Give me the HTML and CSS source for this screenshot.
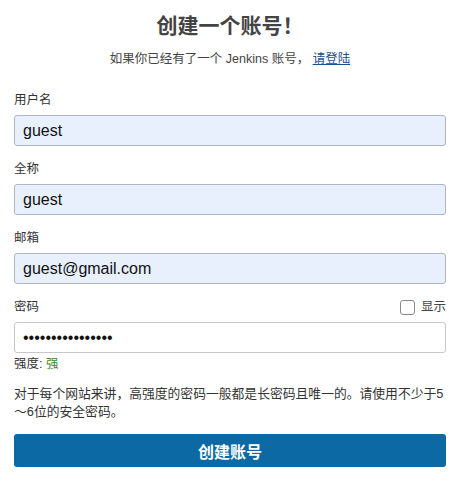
FILE: index.html
```html
<!DOCTYPE html>
<html lang="zh-CN">
<head>
<meta charset="utf-8">
<link rel="stylesheet" href="styles.css">
</head>
<body>
<main class="signup">
  <h1 class="title">创建一个账号！</h1>
  <p class="subtitle">如果你已经有了一个 Jenkins 账号， <a href="#" class="login">请登陆</a></p>
  <div class="field">
    <label class="label">用户名</label>
    <input class="input autofill" type="text" value="guest">
  </div>
  <div class="field">
    <label class="label">全称</label>
    <input class="input autofill" type="text" value="guest">
  </div>
  <div class="field">
    <label class="label">邮箱</label>
    <input class="input autofill" type="text" value="guest@gmail.com">
  </div>
  <div class="field pw">
    <div class="pw-head">
      <label class="label">密码</label>
      <label class="show"><span class="box"></span>显示</label>
    </div>
    <input class="input" type="password" value="abcdefghijklmnop">
  </div>
  <div class="strength">强度: <span class="strong">强</span></div>
  <p class="hint">对于每个网站来讲，高强度的密码一般都是长密码且唯一的。请使用不少于5～6位的安全密码。</p>
  <button class="submit" type="button">创建账号</button>
</main>
</body>
</html>
```
FILE: styles.css
```css
html, body {
  margin: 0;
  padding: 0;
  background: #fff;
}
body {
  font-family: "Liberation Sans", "Noto Sans CJK SC", sans-serif;
  color: #333;
}
.signup {
  padding: 0 14px;
  display: flex;
  flex-direction: column;
}
.title {
  margin: 12px 0 0;
  font-size: 21px;
  line-height: 28px;
  font-weight: bold;
  color: #444;
  text-align: center;
}
.subtitle {
  margin: 10px 0 0;
  font-size: 12.5px;
  line-height: 18px;
  text-align: center;
  color: #444;
}
.login {
  color: #1b4f8c;
  text-decoration: underline;
}
.field {
  display: flex;
  flex-direction: column;
}
.field:first-of-type {
  margin-top: 23px;
}
.label {
  font-size: 12.5px;
  line-height: 18px;
  margin-bottom: 6px;
  color: #333;
}
.input {
  box-sizing: border-box;
  height: 31px;
  margin: 0 0 14px;
  padding: 0 8px;
  border: 1px solid #c7c7c7;
  border-radius: 3px;
  font-family: "Liberation Sans", sans-serif;
  font-size: 16px;
  color: #111;
  background: #fff;
  outline: none;
}
.autofill {
  background: #e8f0fe;
  border-color: #aeb6c3;
}
.pw .input {
  margin-bottom: 0;
}
.pw-head {
  display: flex;
  justify-content: space-between;
  align-items: flex-start;
}
.show {
  display: flex;
  align-items: center;
  gap: 6px;
  font-size: 12.5px;
  line-height: 18px;
  color: #444;
}
.box {
  box-sizing: border-box;
  width: 15px;
  height: 15px;
  border: 1px solid #8a8a8a;
  border-radius: 3px;
  background: #fff;
}
.strength {
  font-size: 12.5px;
  line-height: 18px;
  margin-top: 2px;
  color: #333;
}
.strong {
  color: #3a8a1f;
}
.hint {
  margin: 12px 0 0;
  font-size: 12.8px;
  line-height: 18px;
  color: #333;
}
.submit {
  margin-top: 13px;
  height: 33px;
  border: none;
  border-radius: 3px;
  background: #0d69a3;
  color: #fff;
  font-family: "Liberation Sans", "Noto Sans CJK SC", sans-serif;
  font-size: 16px;
  font-weight: bold;
}
```
